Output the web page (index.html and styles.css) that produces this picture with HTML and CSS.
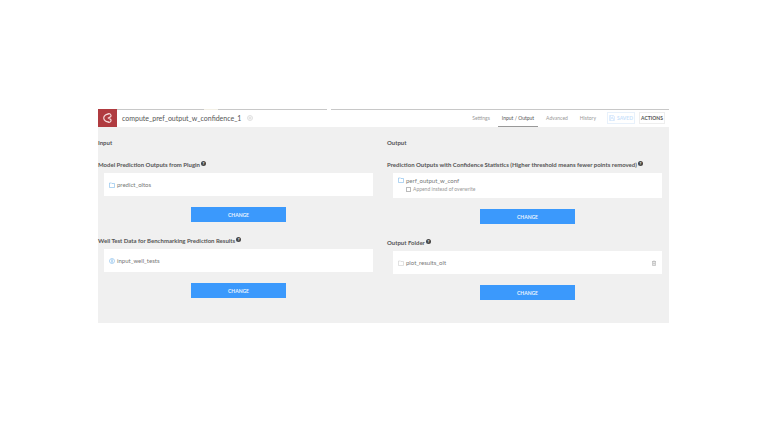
FILE: index.html
```
<!DOCTYPE html>
<html lang="en">
<head>
  <meta charset="UTF-8">
  <title>compute_pref_output_w_confidence_1</title>
  <link rel="stylesheet" href="styles.css">
</head>
<body>

  <div class="page">
    <header class="topbar">
      <div class="logo">
        <svg viewBox="0 0 19 19"><path d="M11 5.500C8.500 5 5.500 7 5.500 9.500C5.500 12 8.500 14 11 13.500M9 5.500C12 4 14 6 13 8L10.500 9.500L13 11C14 13 12 15 9 13.500"/></svg>
      </div>
      <h1>compute_pref_output_w_confidence_1</h1>
      <svg class="status" viewBox="0 0 6 6"><circle cx="3" cy="3" r="2.500"/><path d="M1.500 3h3M3 1.500v3"/></svg>
      <nav>
        <a href="#">Settings</a>
        <a href="#" class="active">Input / Output</a>
        <a href="#">Advanced</a>
        <a href="#">History</a>
      </nav>
      <button class="saved"><svg viewBox="0 0 6 6"><path d="M.5 .5h4l1 1v4h-5zM1.500 .5v2h2.500v-2M1.500 5.500v-2h3v2"/></svg>SAVED</button>
      <button class="actions">ACTIONS</button>
    </header>

    <main>
      <section>
        <h2>Input</h2>

        <h3>Model Prediction Outputs from Plugin <span class="help">?</span></h3>
        <div class="box">
          <svg class="icon" viewBox="0 0 6 6"><path d="M.5 5.500v-4.500h2l.5 .5h2.500v4z"/></svg>
          <a href="#">predict_oltos</a>
        </div>
        <button class="change">CHANGE</button>

        <h3>Well Test Data for Benchmarking Prediction Results <span class="help">?</span></h3>
        <div class="box">
          <svg class="icon" viewBox="0 0 6 6"><circle cx="3" cy="3" r="2.500"/><path d="M3 1.300v3.400" stroke-width="1"/></svg>
          <a href="#">input_well_tests</a>
        </div>
        <button class="change">CHANGE</button>
      </section>

      <section>
        <h2>Output</h2>

        <h3>Prediction Outputs with Confidence Statistics (Higher threshold means fewer points removed) <span class="help">?</span></h3>
        <div class="box tall">
          <svg class="icon" viewBox="0 0 6 6"><path d="M.5 5.500v-4.500h2l.5 .5h2.500v4z"/></svg>
          <div>
            <a href="#">perf_output_w_conf</a>
            <label class="append"><input type="checkbox">Append instead of overwrite</label>
          </div>
        </div>
        <button class="change">CHANGE</button>

        <h3>Output Folder <span class="help">?</span></h3>
        <div class="box">
          <svg class="icon grey" viewBox="0 0 6 6"><path d="M.5 5.500v-4.500h2l.5 .5h2.500v4z"/></svg>
          <a href="#">plot_results_olt</a>
          <button class="delete" aria-label="Delete"><svg viewBox="0 0 6 6"><path d="M1 1.500h4M2.300 1h1.400M1.500 1.500v4h3v-4M2.500 2.500v2M3.500 2.500v2"/></svg></button>
        </div>
        <button class="change">CHANGE</button>
      </section>
    </main>
  </div>

</body>
</html>
```
FILE: styles.css
```
* {
  box-sizing: border-box;
}
body {
  margin: 0;
  padding: 109px 99px 0 98px;
  background: #fff;
  font-family: Lato, "Open Sans", sans-serif;
  font-size: 6px;
  line-height: 8px;
  color: #777;
}
a {
  color: inherit;
  text-decoration: none;
}
button {
  font: inherit;
  padding: 0;
  cursor: pointer;
}
svg {
  display: block;
  width: 6px;
  height: 6px;
  fill: none;
  stroke: currentColor;
  stroke-width: 0.6;
}
.topbar {
  display: flex;
  align-items: center;
  height: 18px;
  padding-right: 4px;
  /* top rule, broken in two places */
  background: linear-gradient(to right, #c8c8c8 106px, #f3f0e6 106px 120px, #c8c8c8 120px 229px, #fff 229px 233px, #c8c8c8 233px) top / 100% 1px no-repeat;
}
.logo {
  width: 19px;
  height: 18px;
  margin-right: 5px;
  background: #b03b40;
  color: #f6dede;
}
.logo svg {
  width: 19px;
  height: 18px;
  stroke-width: 1.2;
}
h1 {
  margin: 0;
  font-size: 7px;
  font-weight: 400;
  color: #555;
}
.status {
  margin-left: 6px;
  color: #ccc;
}
nav {
  display: flex;
  align-self: stretch;
  gap: 4px;
  margin-left: auto;
  margin-right: 7px;
  font-size: 5px;
  line-height: 18px;
  color: #999;
}
nav a {
  padding: 0 4px;
}
nav .active {
  color: #555;
  border-bottom: 1px solid #999;
}
.saved, .actions {
  display: flex;
  align-items: center;
  justify-content: center;
  gap: 2px;
  width: 26px;
  height: 12px;
  border: 1px solid #eee;
  background: #fff;
  font-size: 5px;
  font-weight: 700;
  color: #555;
}
.saved {
  margin-right: 4px;
  width: 28px;
  border-color: #e8f1fb;
  color: #c9e1fb;
}
main {
  display: grid;
  grid-template-columns: 1fr 1fr;
  gap: 14px;
  padding: 12px 7px 8px 0;
  background: #f0f0f0;
}
h2 {
  margin: 0 0 14px;
  font-size: 6px;
  color: #555;
}
h3 {
  display: flex;
  margin: 0 0 4px;
  gap: 1px;
  font-size: 6px;
  color: #555;
  white-space: nowrap;
}
.help {
  width: 5px;
  height: 5px;
  border-radius: 50%;
  background: #444;
  color: #fff;
  font-size: 4px;
  line-height: 5px;
  text-align: center;
}
.box {
  display: flex;
  align-items: center;
  gap: 2px;
  height: 23px;
  margin-left: 6px;
  padding: 0 5px;
  background: #fff;
}
.tall {
  align-items: flex-start;
  height: 25px;
  padding-top: 4px;
}
.icon {
  color: #7db8ea;
}
.grey {
  color: #ccc;
}
.append {
  display: flex;
  align-items: center;
  gap: 2px;
  font-size: 5px;
  color: #999;
}
.append input {
  appearance: none;
  width: 5px;
  height: 5px;
  margin: 0;
  border: 1px solid #bbb;
}
section {
  display: flex;
  flex-direction: column;
}
.change {
  align-self: center;
  width: 95px;
  height: 15px;
  /* centred under the box, which is indented 6px */
  margin: 11px 0 15px 6px;
  border: none;
  background: #3b99fc;
  color: #e8f3ff;
  font-size: 5px;
  font-weight: 700;
}
.delete {
  margin-left: auto;
  border: none;
  background: none;
  color: #aaa;
}
```
